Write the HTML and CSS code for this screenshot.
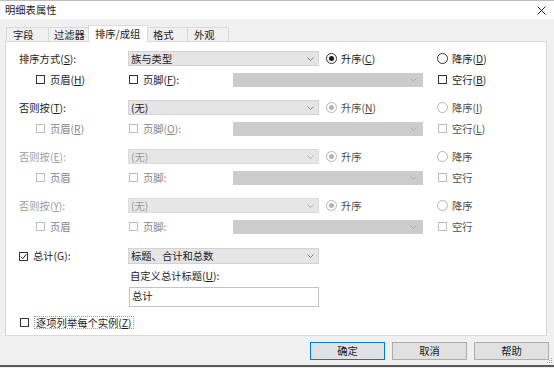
FILE: index.html
```html
<!DOCTYPE html>
<html lang="zh-CN">
<head>
<meta charset="utf-8">
<title>明细表属性</title>
<link rel="stylesheet" href="styles.css">
</head>
<body>
<div class="titlebar">
  <span class="title">明细表属性</span>
  <svg class="close" viewBox="0 0 9 9" width="9" height="9"><path d="M0.5 0.5L8.5 8.5M8.5 0.5L0.5 8.5" stroke="#222" stroke-width="1" fill="none"/></svg>
</div>
<div class="tabs">
  <div class="tab t1">字段</div>
  <div class="tab t2">过滤器</div>
  <div class="tab t3 active">排序/成组</div>
  <div class="tab t4">格式</div>
  <div class="tab t5">外观</div>
</div>
<div class="panel">
  <div class="row">
    <span class="lbl">排序方式(<u>S</u>):</span>
    <div class="sel"><span>族与类型</span><svg class="chev" viewBox="0 0 7 4" width="7" height="4"><path d="M0.5 0.5L3.5 3.5L6.5 0.5" fill="none" stroke="#7a7a7a"/></svg></div>
    <div class="item r1"><i class="rb on"></i>升序(<u>C</u>)</div>
    <div class="item"><i class="rb"></i>降序(<u>D</u>)</div>
  </div>
  <div class="row sub">
    <div class="item c1"><i class="cb"></i>页眉(<u>H</u>)</div>
    <div class="item c2"><i class="cb"></i>页脚(<u>F</u>):</div>
    <div class="sel dsel"><span></span><svg class="chev" viewBox="0 0 7 4" width="7" height="4"><path d="M0.5 0.5L3.5 3.5L6.5 0.5" fill="none" stroke="#aaa"/></svg></div>
    <div class="item c4"><i class="cb"></i>空行(<u>B</u>)</div>
  </div>

  <div class="row gap">
    <span class="lbl">否则按(<u>T</u>):</span>
    <div class="sel"><span>(无)</span><svg class="chev" viewBox="0 0 7 4" width="7" height="4"><path d="M0.5 0.5L3.5 3.5L6.5 0.5" fill="none" stroke="#8a8a8a"/></svg></div>
    <div class="item r1 dr"><i class="rb on dis"></i>升序(<u>N</u>)</div>
    <div class="item dr"><i class="rb dis"></i>降序(<u>I</u>)</div>
  </div>
  <div class="row sub">
    <div class="item c1 dl"><i class="cb dis"></i>页眉(<u>R</u>)</div>
    <div class="item c2 dl"><i class="cb dis"></i>页脚(<u>O</u>):</div>
    <div class="sel dsel"><span></span><svg class="chev" viewBox="0 0 7 4" width="7" height="4"><path d="M0.5 0.5L3.5 3.5L6.5 0.5" fill="none" stroke="#aaa"/></svg></div>
    <div class="item c4 dr"><i class="cb dis"></i>空行(<u>L</u>)</div>
  </div>

  <div class="row gap">
    <span class="lbl dlbl">否则按(<u>E</u>):</span>
    <div class="sel gsel"><span>(无)</span><svg class="chev" viewBox="0 0 7 4" width="7" height="4"><path d="M0.5 0.5L3.5 3.5L6.5 0.5" fill="none" stroke="#b0b0b0"/></svg></div>
    <div class="item r1 dr"><i class="rb on dis"></i>升序</div>
    <div class="item dr"><i class="rb dis"></i>降序</div>
  </div>
  <div class="row sub">
    <div class="item c1 dl"><i class="cb dis"></i>页眉</div>
    <div class="item c2 dl"><i class="cb dis"></i>页脚:</div>
    <div class="sel dsel"><span></span><svg class="chev" viewBox="0 0 7 4" width="7" height="4"><path d="M0.5 0.5L3.5 3.5L6.5 0.5" fill="none" stroke="#aaa"/></svg></div>
    <div class="item c4 dr"><i class="cb dis"></i>空行</div>
  </div>

  <div class="row gap">
    <span class="lbl dlbl">否则按(<u>Y</u>):</span>
    <div class="sel gsel"><span>(无)</span><svg class="chev" viewBox="0 0 7 4" width="7" height="4"><path d="M0.5 0.5L3.5 3.5L6.5 0.5" fill="none" stroke="#b0b0b0"/></svg></div>
    <div class="item r1 dr"><i class="rb on dis"></i>升序</div>
    <div class="item dr"><i class="rb dis"></i>降序</div>
  </div>
  <div class="row sub">
    <div class="item c1 dl"><i class="cb dis"></i>页眉</div>
    <div class="item c2 dl"><i class="cb dis"></i>页脚:</div>
    <div class="sel dsel"><span></span><svg class="chev" viewBox="0 0 7 4" width="7" height="4"><path d="M0.5 0.5L3.5 3.5L6.5 0.5" fill="none" stroke="#aaa"/></svg></div>
    <div class="item c4 dr"><i class="cb dis"></i>空行</div>
  </div>

  <div class="row total">
    <div class="lbl item"><i class="cb chk"><svg viewBox="0 0 7 7" width="7" height="7"><path d="M0.8 3.6L2.8 5.6L6.4 1.2" fill="none" stroke="#222" stroke-width="1"/></svg></i>总计(G):</div>
    <div class="sel tsel"><span>标题、合计和总数</span><svg class="chev" viewBox="0 0 7 4" width="7" height="4"><path d="M0.5 0.5L3.5 3.5L6.5 0.5" fill="none" stroke="#7a7a7a"/></svg></div>
  </div>
  <div class="custom">自定义总计标题(<u>U</u>):</div>
  <div class="input">总计</div>
  <div class="item last"><i class="cb"></i><span class="focus">逐项列举每个实例(<u>Z</u>)</span></div>
</div>
<div class="btns">
  <div class="btn def">确定</div>
  <div class="btn">取消</div>
  <div class="btn">帮助</div>
</div>
<div class="bottom"></div>
<svg class="grip" viewBox="0 0 6 6" width="6" height="6"><g fill="#a0a0a0"><rect x="4" y="0" width="1" height="1"/><rect x="2" y="2" width="1" height="1"/><rect x="4" y="2" width="1" height="1"/><rect x="0" y="4" width="1" height="1"/><rect x="2" y="4" width="1" height="1"/><rect x="4" y="4" width="1" height="1"/></g></svg>
</body>
</html>
```
FILE: styles.css
```css
* { box-sizing: border-box; margin: 0; padding: 0; }
html, body { width: 554px; height: 368px; overflow: hidden; }
body {
  position: relative;
  background: #f0f0f0;
  font-family: "Noto Sans CJK SC", "Microsoft YaHei", sans-serif;
  font-size: 10.3px;
  line-height: 12px;
  color: #1b1b1b;
}
u { text-decoration: underline; text-underline-offset: 1px; }

.titlebar {
  height: 19px;
  background: #fff;
  border-top: 1px solid #bdbdbd;
  display: flex;
  align-items: center;
  justify-content: space-between;
  padding: 0 8px 0 5px;
}
.close { display: block; }

.tabs {
  height: 22px;
  display: flex;
  align-items: flex-end;
  padding-left: 6px;
}
.tab {
  height: 14px;
  border: 1px solid #d9d9d9;
  border-bottom: none;
  margin-left: -1px;
  padding-left: 6px;
  line-height: 13px;
  background: #f0f0f0;
}
.t1 { width: 43px; margin-left: 0; }
.t2 { width: 41px; padding-left: 5px; }
.t3 { width: 60px; }
.t4 { width: 41px; padding-left: 5px; }
.t5 { width: 42px; }
.tab.active {
  height: 17px;
  margin-bottom: -1px;
  background: #fff;
  position: relative;
  z-index: 1;
  line-height: 15px;
}

.panel {
  margin: 0 7px 0 5px;
  height: 295px;
  background: #fff;
  border: 1px solid #d9d9d9;
  padding: 9px 0 0 13px;
}
.row { display: flex; align-items: center; height: 15px; }
.sub { margin-top: 6px; padding-left: 17px; }
.gap { margin-top: 13px; }
.total { margin-top: 14px; height: 16px; }

.lbl { width: 109px; flex: none; }
.dlbl { color: #9c9c9c; }

.item { display: flex; align-items: center; white-space: nowrap; }
.r1 { width: 111px; margin-left: 7px; flex: none; }
.c1 { width: 93px; flex: none; }
.c2 { width: 104px; flex: none; }
.c4 { margin-left: 15px; }
.dl { color: #858585; }
.dr { color: #4d4d4d; }

.sel {
  width: 191px;
  height: 15px;
  flex: none;
  background: #e5e5e5;
  border: 1px solid #d3d3d3;
  display: flex;
  align-items: center;
  justify-content: space-between;
  padding: 0 4px 0 2px;
}
.chev { display: block; }
.dsel { width: 190px; height: 14px; background: #cccccc; border-color: #cccccc; padding-right: 5px; }
.gsel { background: #e6e6e6; border-color: #dcdcdc; color: #9a9a9a; }
.tsel { height: 16px; }

.cb {
  width: 9px;
  height: 9px;
  border: 1px solid #333;
  background: #fff;
  margin-right: 5px;
  flex: none;
  display: flex;
  align-items: center;
  justify-content: center;
}
.cb.dis { border-color: #bdbdbd; }
.cb svg { display: block; }

.rb {
  width: 11px;
  height: 11px;
  border: 1px solid #333;
  border-radius: 50%;
  margin-right: 4px;
  flex: none;
  display: flex;
  align-items: center;
  justify-content: center;
  background: #fff;
}
.rb.on::after {
  content: "";
  width: 5px;
  height: 5px;
  border-radius: 50%;
  background: #1b1b1b;
}
.rb.dis { border-color: #b5b5b5; }
.rb.dis.on::after { background: #b5b5b5; }

.custom { margin: 6px 0 0 111px; height: 12px; }
.input {
  margin: 5px 0 0 110px;
  width: 190px;
  height: 20px;
  border: 1px solid #c3c3c3;
  background: #fff;
  padding: 2px 0 0 2px;
}
.last { margin: 9px 0 0 1px; height: 12px; }
.focus { border: 1px dotted #9a9a9a; padding: 0 1px; line-height: 11px; }

.btns {
  display: flex;
  justify-content: flex-end;
  gap: 7px;
  padding-right: 5px;
  margin-top: 6px;
}
.btn {
  width: 75px;
  height: 18px;
  background: #e1e1e1;
  border: 1px solid #adadad;
  display: flex;
  align-items: center;
  justify-content: center;
}
.btn.def { border-color: #0078d7; }

.bottom { margin-top: 5px; height: 2px; background: #5a5a5a; }
.grip { position: absolute; right: 1px; bottom: 4px; display: block; }
```
